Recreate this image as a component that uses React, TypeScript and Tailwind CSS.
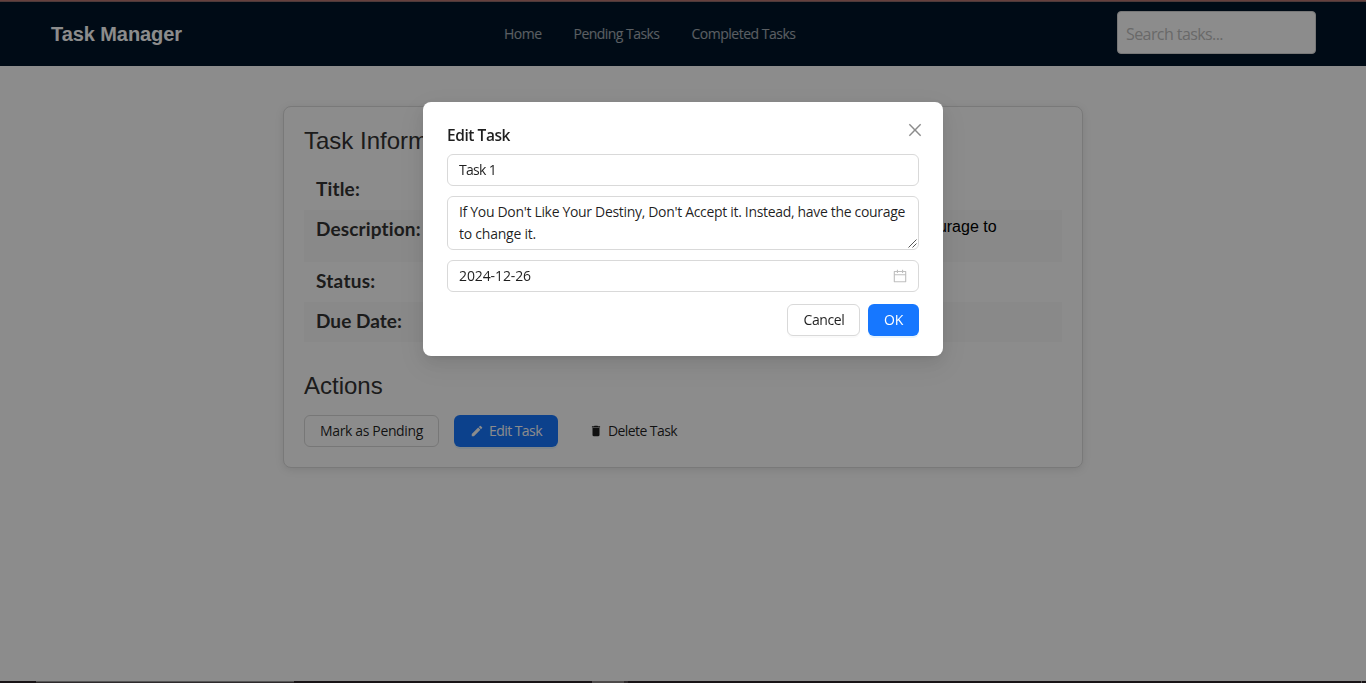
import React from "react";

const UI = "font-['Open_Sans','Noto_Sans',sans-serif]";
const ARIAL = "font-['Liberation_Sans',Arial,sans-serif]";

function Row({ label, tall, striped, children }: { label: string; tall?: boolean; striped?: boolean; children: React.ReactNode }) {
  return (
    <div className={`flex px-3 ${tall ? "h-[52px]" : "h-10"} ${striped ? "bg-[#f9f9f9]" : ""}`}>
      <div className="w-[150px] shrink-0 pt-[7px] font-['Lato',sans-serif] text-[19px] leading-6 font-bold text-[#333]">
        <Fit width={LABEL_WIDTHS[label]}>{label}</Fit>
      </div>
      <div className={`${ARIAL} pt-2 text-base leading-[18px] text-black`}>{children}</div>
    </div>
  );
}

const LABEL_WIDTHS: Record<string, number> = {
  "Title:": 44,
  "Description:": 105,
  "Status:": 59.5,
  "Due Date:": 86,
};

/* Keeps a one-line text at a fixed width by spreading the difference over its letters. */
function Fit({ width, children }: { width: number; children: string }) {
  const ref = React.useRef<HTMLSpanElement>(null);
  React.useLayoutEffect(() => {
    const el = ref.current;
    if (!el) return;
    el.style.letterSpacing = "0px";
    const natural = el.getBoundingClientRect().width;
    el.style.letterSpacing = `${(width - natural) / children.length}px`;
  }, [width, children]);
  return (
    <span ref={ref} className="inline-block whitespace-nowrap">
      {children}
    </span>
  );
}

function EditModal() {
  const field = "w-full rounded-md border border-[#d9d9d9] bg-white text-sm leading-[22px] text-black/88";
  return (
    <div className="flex h-[254px] w-[520px] flex-col rounded-lg bg-white px-6 pt-5 shadow-[0_6px_16px_0_rgba(0,0,0,0.08),0_3px_6px_-4px_rgba(0,0,0,0.12),0_9px_28px_8px_rgba(0,0,0,0.05)]">
      <div className="flex h-6 items-center justify-between">
        <h2 className="pt-px text-[15.5px] leading-6 font-semibold text-black/88">
          <Fit width={63}>Edit Task</Fit>
        </h2>
        <svg className="mt-[-9px] mr-[-4px] size-4" viewBox="64 64 896 896" fill="#000" fillOpacity="0.45">
          <path d="M799.86 166.31c.02 0 .04.02.08.06l57.69 57.7c.04.03.05.05.06.08a.12.12 0 010 .06c0 .03-.02.05-.06.09L569.93 512l287.7 287.7c.04.04.05.06.06.09a.12.12 0 010 .07c0 .02-.02.04-.06.08l-57.7 57.69c-.03.04-.05.05-.07.06a.12.12 0 01-.07 0c-.03 0-.05-.02-.09-.06L512 569.93l-287.7 287.7c-.04.04-.06.05-.09.06a.12.12 0 01-.07 0c-.02 0-.04-.02-.08-.06l-57.69-57.7c-.04-.03-.05-.05-.06-.07a.12.12 0 010-.07c0-.03.02-.05.06-.09L454.07 512l-287.7-287.7c-.04-.04-.05-.06-.06-.09a.12.12 0 010-.07c0-.02.02-.04.06-.08l57.7-57.69c.03-.04.05-.05.07-.06a.12.12 0 01.07 0c.03 0 .05.02.09.06L512 454.07l287.7-287.7c.04-.04.06-.05.09-.06a.12.12 0 01.07 0z" />
        </svg>
      </div>
      <div className={`${field} mt-2 flex h-8 items-center px-[11px]`}>
        <Fit width={37}>Task 1</Fit>
      </div>
      <div className={`${field} relative mt-2.5 h-[54px] px-[11px] py-1`}>
        <div><Fit width={446}>If You Don't Like Your Destiny, Don't Accept it. Instead, have the courage</Fit></div>
        <div><Fit width={77}>to change it.</Fit></div>
        <svg className="absolute right-px bottom-px size-[9px]" viewBox="0 0 9 9" stroke="#444" strokeWidth="0.9" fill="none">
          <path d="M0.5 8.5L8.5 0.5M4.5 8.5L8.5 4.5" />
        </svg>
      </div>
      <div className={`${field} mt-2.5 flex h-8 items-center justify-between px-[11px]`}>
        <Fit width={72}>2024-12-26</Fit>
        <svg className="size-3.5" viewBox="64 64 896 896" fill="#000" fillOpacity="0.25">
          <path d="M880 184H712v-64c0-4.400-3.600-8-8-8h-56c-4.400 0-8 3.600-8 8v64H384v-64c0-4.400-3.600-8-8-8h-56c-4.400 0-8 3.600-8 8v64H144c-17.700 0-32 14.300-32 32v664c0 17.700 14.300 32 32 32h736c17.700 0 32-14.300 32-32V216c0-17.700-14.300-32-32-32zm-40 656H184V460h656v380zM184 392V256h128v48c0 4.400 3.600 8 8 8h56c4.400 0 8-3.600 8-8v-48h256v48c0 4.400 3.600 8 8 8h56c4.400 0 8-3.600 8-8v-48h128v136H184z" />
        </svg>
      </div>
      <div className="mt-3 flex justify-end gap-2 text-sm leading-[22px]">
        <button className="flex h-8 w-[73px] items-center justify-center rounded-md border border-[#d9d9d9] bg-white pl-px text-black/88 shadow-[0_2px_0_rgba(0,0,0,0.02)]">
          <Fit width={41}>Cancel</Fit>
        </button>
        <button className="flex h-8 w-[51px] items-center justify-center rounded-md bg-[#1677ff] font-medium text-white shadow-[0_2px_0_rgba(5,145,255,0.1)]">
          <Fit width={19}>OK</Fit>
        </button>
      </div>
    </div>
  );
}

export default function App() {
  return (
    <div className={`${UI} flex h-[683px] w-full flex-col overflow-hidden bg-white`}>
      <div className="h-0.5 shrink-0 border-b border-[#8c6a6a] bg-[#b87570]" />
      <header className="flex h-16 shrink-0 items-center justify-between bg-[#001529] px-[50px]">
        <h1 className={`${ARIAL} w-[454px] pl-px text-xl font-bold text-white`}>
          <Fit width={131}>Task Manager</Fit>
        </h1>
        <nav className="flex flex-1 gap-8 text-sm text-white/65">
          <a><Fit width={37.5}>Home</Fit></a>
          <a><Fit width={86}>Pending Tasks</Fit></a>
          <a><Fit width={104}>Completed Tasks</Fit></a>
        </nav>
        <div className="mt-[-3px] flex h-[43px] w-[199px] items-center rounded-[4px] border border-[#d9d9d9] bg-white px-2 pt-[3px] text-base text-[#bfbfbf]">
          <Fit width={97}>Search tasks...</Fit>
        </div>
      </header>
      <main className="flex flex-1 justify-center pt-10">
        <section className="h-[362px] w-[800px] rounded-lg border border-[#ddd] bg-white px-5 pt-5 shadow-[0_2px_8px_rgba(0,0,0,0.1)]">
          <h2 className={`${ARIAL} mb-[15px] text-2xl leading-7 text-[#333]`}>Task Information</h2>
          <Row label="Title:">Task 1</Row>
          <Row label="Description:" striped tall>
            If You Don't Like Your Destiny, Don't Accept it. Instead, have the courage to change it.
          </Row>
          <Row label="Status:">Completed</Row>
          <Row label="Due Date:" striped>2024-12-26</Row>
          <h2 className={`${ARIAL} mt-[30px] text-2xl leading-7 text-[#333]`}>Actions</h2>
          <div className="mt-[15px] flex text-sm leading-[22px]">
            <button className="flex h-8 w-[135px] items-center justify-center rounded-md border border-[#d9d9d9] bg-white text-black/88">
              <Fit width={103}>Mark as Pending</Fit>
            </button>
            <button className="ml-[15px] flex h-8 w-[104px] items-center rounded-md bg-[#1677ff] pl-4 text-white shadow-[0_2px_0_rgba(5,145,255,0.1)]">
              <svg className="mr-[5px] size-3.5" viewBox="0 0 24 24" fill="currentColor">
                <path d="M3 17.250V21h3.750L17.810 9.940l-3.750-3.750L3 17.250zM20.710 7.040a1 1 0 0 0 0-1.410l-2.340-2.340a1 1 0 0 0-1.410 0l-1.830 1.830 3.750 3.750 1.830-1.830z" />
              </svg>
              <Fit width={53}>Edit Task</Fit>
            </button>
            <button className="ml-[15px] flex h-8 items-center pl-4 text-black/88">
              <svg className="mr-[5px] size-3.5" viewBox="0 0 24 24" fill="currentColor">
                <path d="M6 19c0 1.100.900 2 2 2h8c1.100 0 2-.900 2-2V7H6v12zM19 4h-3.500l-1-1h-5l-1 1H5v2h14V4z" />
              </svg>
              <Fit width={69}>Delete Task</Fit>
            </button>
          </div>
        </section>
      </main>
      <footer className="flex h-0.5 shrink-0">
        <div className="w-9 bg-[#2c2428]" />
        <div className="w-[258px] border-t border-[#999] bg-[#554d51]" />
        <div className="w-[298px] bg-[#2c2428]" />
        <div className="w-8 bg-[#8c8888]" />
        <div className="w-1 bg-[#554d51]" />
        <div className="flex-1 bg-[#2c2428]" />
        <div className="w-px bg-[#999]" />
        <div className="w-1 bg-[#2c2428]" />
      </footer>
      <div className="fixed inset-0 flex items-start justify-center bg-black/45 pt-[102px]">
        <EditModal />
      </div>
    </div>
  );
}
